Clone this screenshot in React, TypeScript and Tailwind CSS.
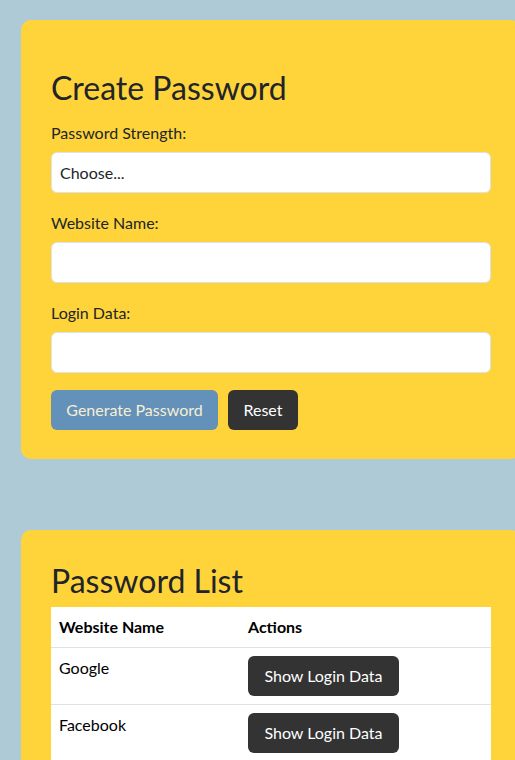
import React from "react";

const rows = ["Google", "Facebook"];

export default function App() {
  return (
    <div
      className="min-h-screen w-full overflow-hidden bg-[#aecad6] pl-[21px] pt-[20px] pb-10 text-[#212529]"
      style={{ fontFamily: "Lato, 'Open Sans', sans-serif" }}
    >
      {/* Create form */}
      <div className="w-[500px] rounded-[10px] bg-[#ffd43b] px-[30px] pt-[49px] pb-[29px]">
        <h2 className="text-[32px] leading-[1.2] font-normal mb-[14px]">Create Password</h2>

        <label className="block text-base leading-6 mb-[7px]">Password Strength:</label>
        <select
          defaultValue=""
          className="block w-full h-[41px] appearance-none rounded-[6px] border border-[#dee2e6] bg-white px-[8px] text-base text-[#212529] outline-none"
        >
          <option value="">Choose...</option>
          <option value="weak">Weak</option>
          <option value="medium">Medium</option>
          <option value="strong">Strong</option>
        </select>

        <label className="block text-base leading-6 mt-[18px] mb-[7px]">Website Name:</label>
        <input className="block w-full h-[41px] rounded-[6px] border border-[#dee2e6] bg-white px-3 outline-none" />

        <label className="block text-base leading-6 mt-[18px] mb-[7px]">Login Data:</label>
        <input className="block w-full h-[41px] rounded-[6px] border border-[#dee2e6] bg-white px-3 outline-none" />

        <div className="mt-[17px] flex gap-[10px]">
          <button className="h-[40px] w-[167px] rounded-[6px] bg-[#6391ba] text-base text-[#f6efd2]">
            Generate Password
          </button>
          <button className="h-[40px] w-[70px] rounded-[6px] bg-[#333333] text-base text-white">Reset</button>
        </div>
      </div>

      {/* List */}
      <div className="mt-[71px] w-[500px] rounded-[10px] bg-[#ffd43b] px-[30px] pt-[32px] pb-[29px]">
        <h2 className="text-[32px] leading-[1.2] font-normal mb-[6px]">Password List</h2>
        <table className="w-full border-collapse bg-white text-base leading-6">
          <thead>
            <tr className="border-b border-[#dee2e6]">
              <th className="w-[189px] p-2 text-left font-bold text-black">Website Name</th>
              <th className="p-2 text-left font-bold text-black">Actions</th>
            </tr>
          </thead>
          <tbody>
            {rows.map((r) => (
              <tr key={r} className="border-b border-[#dee2e6]">
                <td className="p-2 align-top text-black">{r}</td>
                <td className="p-2 align-top">
                  <button className="h-[40px] w-[151px] rounded-[6px] bg-[#333333] text-base text-white">
                    Show Login Data
                  </button>
                </td>
              </tr>
            ))}
          </tbody>
        </table>
      </div>
    </div>
  );
}
